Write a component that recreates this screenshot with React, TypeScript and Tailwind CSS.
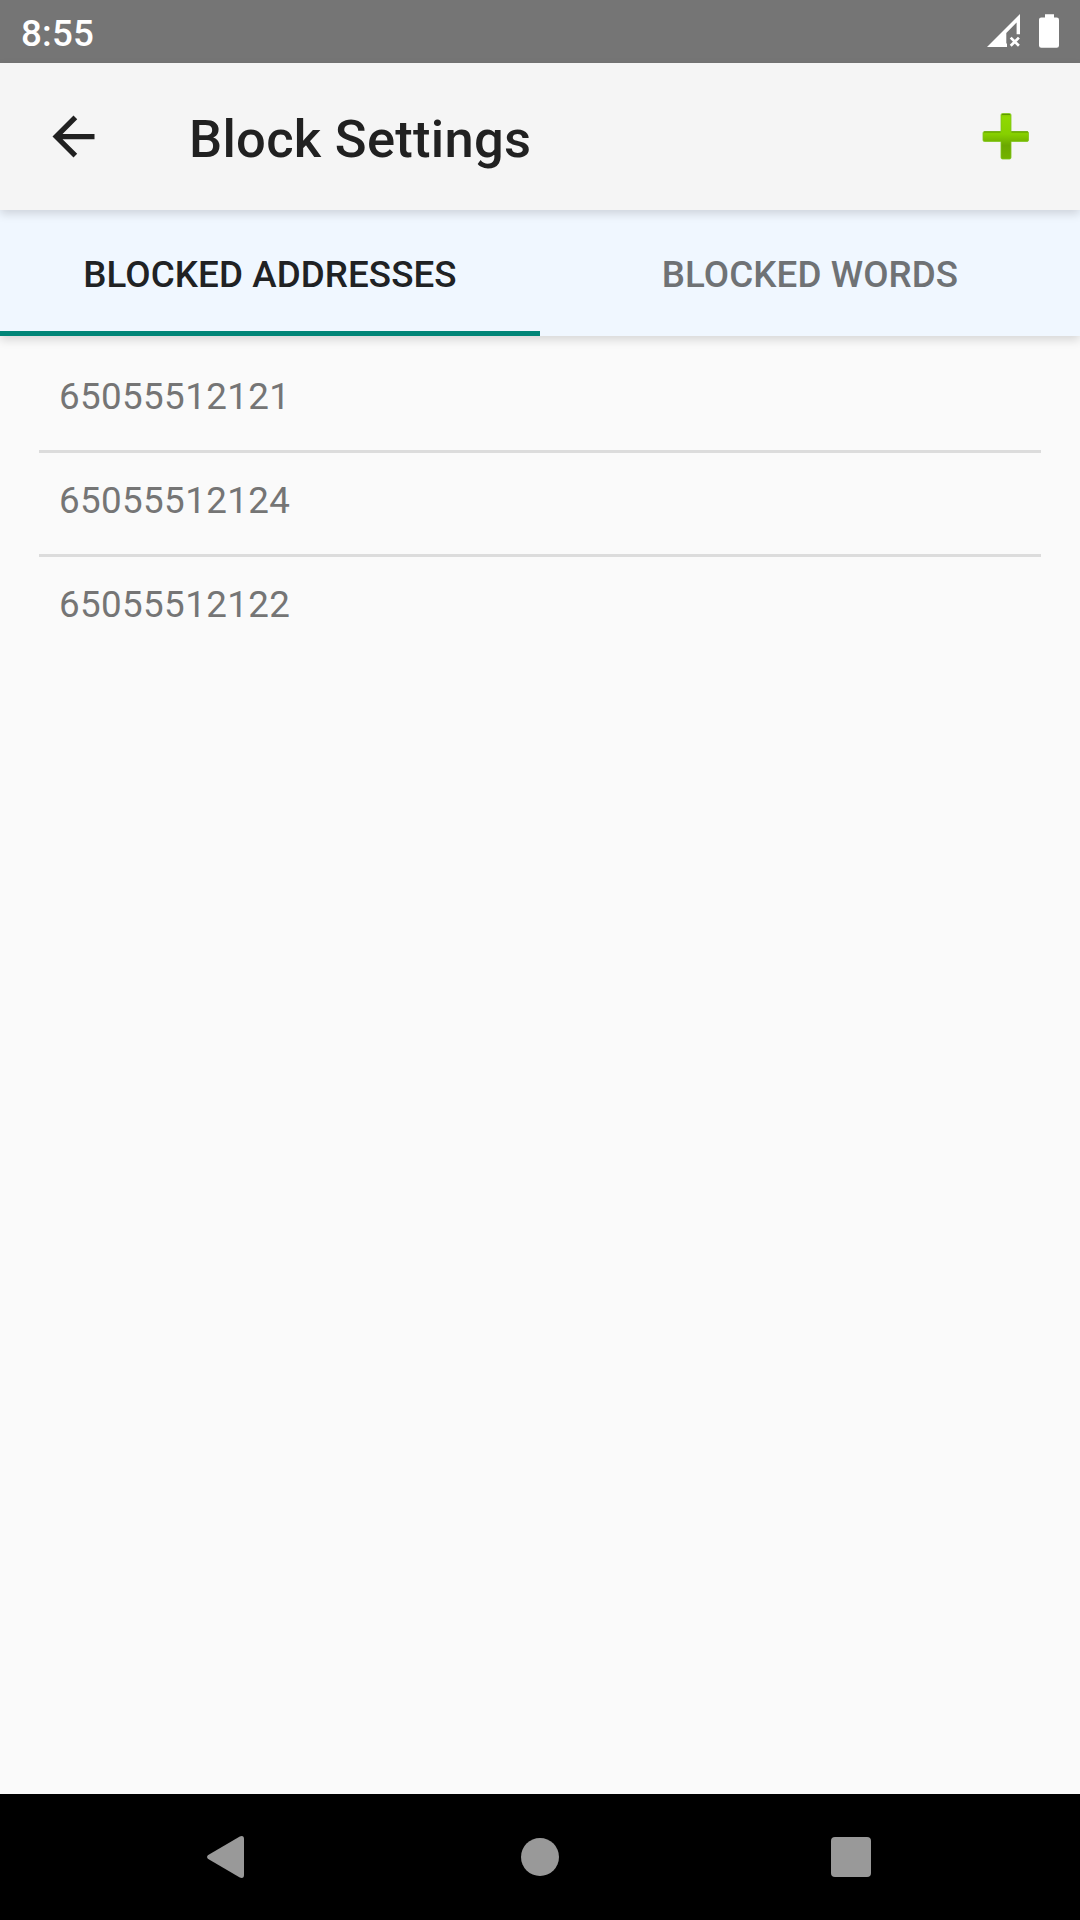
const tabs = [
  { label: "BLOCKED ADDRESSES", active: true },
  { label: "BLOCKED WORDS", active: false },
];

const addresses = ["65055512121", "65055512124", "65055512122"];

function StatusBar() {
  return (
    <div className="flex h-[63px] items-center justify-between bg-[#757575] pl-[21px] pr-[18px] text-white">
      <span className="pt-[3px] text-[36.75px] leading-[43px] font-medium tracking-[0.2px]">8:55</span>
      <div className="flex h-full">
        <svg width="96" height="63" viewBox="966 0 96 63" fill="currentColor">
          <path d="M987 47 1020 14V34.3H1016.6V22.6L1006.3 33V43.5H1007V47Z" />
          <path
            d="M1010.7 37.6 1018.9 45.8M1018.9 37.6 1010.7 45.8"
            stroke="currentColor"
            strokeWidth="2.7"
          />
          <path d="M1045 14.2h9v3.2h2.7a2.3 2.3 0 0 1 2.3 2.3v25.8a2.3 2.3 0 0 1-2.3 2.3h-15.4a2.3 2.3 0 0 1-2.3-2.3V19.7a2.3 2.3 0 0 1 2.3-2.3h3.7z" />
        </svg>
      </div>
    </div>
  );
}

function Toolbar() {
  return (
    <header className="relative z-20 flex h-[147px] items-center bg-[#f5f5f5] pl-[42px] pr-10 shadow-[0_4px_9px_rgba(0,0,0,0.14)]">
      <button aria-label="Back">
        <svg width="63" height="63" viewBox="0 0 24 24" fill="#212121">
          <path d="M20 11H7.83l5.59-5.59L12 4l-8 8 8 8 1.41-1.41L7.83 13H20v-2z" />
        </svg>
      </button>
      <h1 className="ml-[84px] flex-1 pt-[5px] text-[52.5px] leading-[62px] font-medium tracking-[0.28px] text-[#212121]">
        Block Settings
      </h1>
      <button aria-label="Add">
        <svg width="68" height="68" viewBox="0 0 68 68">
          <defs>
            <linearGradient id="plus" x1="0" y1="0" x2="0" y2="1">
              <stop offset="0" stopColor="#84c400" />
              <stop offset="0.08" stopColor="#8fd900" />
              <stop offset="0.45" stopColor="#87d000" />
              <stop offset="0.7" stopColor="#6ba800" />
              <stop offset="1" stopColor="#73b300" />
            </linearGradient>
          </defs>
          <path
            d="M30.5 10.5h7q1.5 0 1.5 1.5v16.5h16q1.5 0 1.5 1.5v7q0 1.5-1.5 1.5H39v16q0 1.5-1.5 1.5h-7q-1.5 0-1.5-1.5v-16H12.5q-1.5 0-1.5-1.5v-7q0-1.5 1.5-1.5H29V12q0-1.5 1.5-1.5z"
            fill="url(#plus)"
            stroke="#7fc41a"
            strokeWidth="0.8"
          />
          <path d="M30 11.5h8M12 29h16.5M39.5 29H56" stroke="#568c00" strokeWidth="1.2" opacity="0.8" />
        </svg>
      </button>
    </header>
  );
}

function TabBar() {
  return (
    <nav className="relative z-10 grid h-[126px] grid-cols-2 bg-[#f0f7ff] shadow-[0_4px_9px_rgba(0,0,0,0.14)]">
      {tabs.map((tab) => (
        <button
          key={tab.label}
          className={`border-b-[5px] pt-[7px] text-[36.75px] leading-[43px] font-medium tracking-[0.08px] ${
            tab.active
              ? "border-[#008577] text-[#202224]"
              : "border-transparent text-[#6f7275]"
          }`}
        >
          {tab.label}
        </button>
      ))}
    </nav>
  );
}

function NavigationBar() {
  return (
    <div className="flex h-[126px] items-center justify-between bg-black pl-[206px] pr-[209px] text-[#999999]">
      <button aria-label="Back">
        <svg width="39" height="44" viewBox="0 0 39 44" fill="currentColor">
          <path d="M1.8 20.2 33.8 1.4Q38 0 38 4V40Q38 44 33.8 42.6L1.8 23.8Q0 22 1.8 20.2Z" />
        </svg>
      </button>
      <button aria-label="Home" className="ml-1 size-[37.5px] rounded-full bg-current" />
      <button aria-label="Recents" className="size-10 rounded-[4px] bg-current" />
    </div>
  );
}

export default function App() {
  return (
    <div className="flex h-[1920px] w-[1080px] flex-col overflow-hidden bg-[#fafafa] font-[Roboto,sans-serif]">
      <StatusBar />
      <Toolbar />
      <TabBar />
      <ul className="flex-1 divide-y-[3px] divide-[#dcdcdc] px-[39px] pt-[13px]">
        {addresses.map((address, i) => (
          <li
            key={address}
            className={`flex items-center px-5 pb-[6px] text-[36.75px] leading-[43px] tracking-[0.37px] text-[#757575] ${
              i < addresses.length - 1 ? "h-[104px]" : "h-[101px]"
            }`}
          >
            {address}
          </li>
        ))}
      </ul>
      <NavigationBar />
    </div>
  );
}
